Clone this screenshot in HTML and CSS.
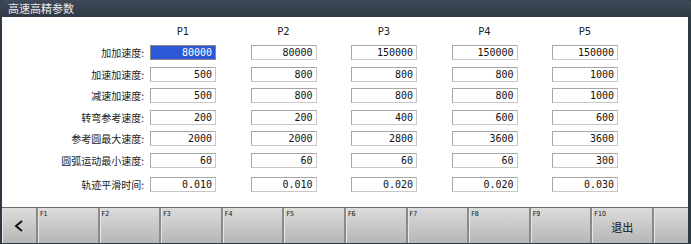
FILE: index.html
```html
<!DOCTYPE html>
<html lang="zh">
<head>
  <meta charset="UTF-8">
  <title>高速高精参数</title>
  <link rel="stylesheet" href="styles.css">
</head>
<body>
  <div class="window">
    <div class="titlebar">高速高精参数</div>

    <div class="content">
      <div class="params">
        <div></div>
        <div class="head">P1</div>
        <div class="head">P2</div>
        <div class="head">P3</div>
        <div class="head">P4</div>
        <div class="head">P5</div>

        <div class="label">加加速度:</div>
        <div class="cell"><div class="field active">80000</div></div>
        <div class="cell"><div class="field">80000</div></div>
        <div class="cell"><div class="field">150000</div></div>
        <div class="cell"><div class="field">150000</div></div>
        <div class="cell"><div class="field">150000</div></div>

        <div class="label">加速加速度:</div>
        <div class="cell"><div class="field">500</div></div>
        <div class="cell"><div class="field">800</div></div>
        <div class="cell"><div class="field">800</div></div>
        <div class="cell"><div class="field">800</div></div>
        <div class="cell"><div class="field">1000</div></div>

        <div class="label">减速加速度:</div>
        <div class="cell"><div class="field">500</div></div>
        <div class="cell"><div class="field">800</div></div>
        <div class="cell"><div class="field">800</div></div>
        <div class="cell"><div class="field">800</div></div>
        <div class="cell"><div class="field">1000</div></div>

        <div class="label">转弯参考速度:</div>
        <div class="cell"><div class="field">200</div></div>
        <div class="cell"><div class="field">200</div></div>
        <div class="cell"><div class="field">400</div></div>
        <div class="cell"><div class="field">600</div></div>
        <div class="cell"><div class="field">600</div></div>

        <div class="label">参考圆最大速度:</div>
        <div class="cell"><div class="field">2000</div></div>
        <div class="cell"><div class="field">2000</div></div>
        <div class="cell"><div class="field">2800</div></div>
        <div class="cell"><div class="field">3600</div></div>
        <div class="cell"><div class="field">3600</div></div>

        <div class="label">圆弧运动最小速度:</div>
        <div class="cell"><div class="field">60</div></div>
        <div class="cell"><div class="field">60</div></div>
        <div class="cell"><div class="field">60</div></div>
        <div class="cell"><div class="field">60</div></div>
        <div class="cell"><div class="field">300</div></div>

        <div class="label">轨迹平滑时间:</div>
        <div class="cell"><div class="field">0.010</div></div>
        <div class="cell"><div class="field">0.010</div></div>
        <div class="cell"><div class="field">0.020</div></div>
        <div class="cell"><div class="field">0.020</div></div>
        <div class="cell"><div class="field">0.030</div></div>
      </div>
    </div>

    <div class="softkeys">
      <div class="key side">
        <svg width="10" height="12" viewBox="0 0 10 12">
          <polyline points="8,1 2,6 8,11" fill="none" stroke="#111" stroke-width="2"/>
        </svg>
      </div>
      <div class="key"><span class="fn">F1</span></div>
      <div class="key"><span class="fn">F2</span></div>
      <div class="key"><span class="fn">F3</span></div>
      <div class="key"><span class="fn">F4</span></div>
      <div class="key"><span class="fn">F5</span></div>
      <div class="key"><span class="fn">F6</span></div>
      <div class="key"><span class="fn">F7</span></div>
      <div class="key"><span class="fn">F8</span></div>
      <div class="key"><span class="fn">F9</span></div>
      <div class="key"><span class="fn">F10</span><span class="cap">退出</span></div>
      <div class="key side"></div>
    </div>
  </div>
</body>
</html>
```

FILE: styles.css
```css
body {
  margin: 0;
  background: #2f3945;
  font-family: "Noto Sans CJK SC", "DejaVu Sans", sans-serif;
}
.window {
  width: 691px;
  height: 244px;
  display: flex;
  flex-direction: column;
  background: #2f3945;
  border-radius: 4px 4px 0 0;
  overflow: hidden;
}
.titlebar {
  height: 17px;
  line-height: 16px;
  padding-left: 8px;
  font-size: 11px;
  color: #e8ecf0;
  background: linear-gradient(#3e4856, #303a46);
}
.content {
  height: 190px;
  margin: 0 3px 0 2px;
  background: #fff;
}
.params {
  display: grid;
  grid-template-columns: 148px repeat(5, 100.5px);
  grid-template-rows: 28px repeat(5, 21.5px) 24px 21.5px;
}
.head {
  width: 66px;
  text-align: center;
  align-self: center;
  font-family: "DejaVu Sans", sans-serif;
  font-size: 10px;
  color: #222;
  padding-top: 1px;
}
.label {
  padding-right: 6px;
  text-align: right;
  font-size: 10px;
  line-height: 15px;
  color: #222;
}
.field {
  width: 66px;
  height: 15px;
  box-sizing: border-box;
  border: 1px solid #a6a6a6;
  border-right-color: #c8c8c8;
  border-bottom-color: #c8c8c8;
  padding-right: 3px;
  text-align: right;
  font-family: "DejaVu Sans Mono", monospace;
  font-size: 10px;
  line-height: 13px;
  color: #111;
  background: #fff;
}
.field.active {
  background: #2c58d6;
  border-color: #8a8a8a;
  color: #fff;
}
.softkeys {
  height: 35px;
  margin: 0 3px 0 2px;
  display: flex;
  border-top: 1px solid #6c6c6c;
  background: #8a8a8a;
  gap: 2px;
}
.key {
  flex: 1;
  position: relative;
  background: linear-gradient(#dcdcdc, #b6b6b6);
  box-shadow: inset 1px 0 0 #e6e6e6;
}
.key.side {
  flex: 0 0 34px;
  display: flex;
  align-items: center;
  justify-content: center;
}
.fn {
  position: absolute;
  top: 2px;
  left: 2px;
  font-family: "DejaVu Sans Condensed", "DejaVu Sans", sans-serif;
  font-size: 7px;
  color: #111;
}
.cap {
  display: block;
  text-align: center;
  padding-top: 11px;
  font-size: 11px;
  color: #111;
}
```
